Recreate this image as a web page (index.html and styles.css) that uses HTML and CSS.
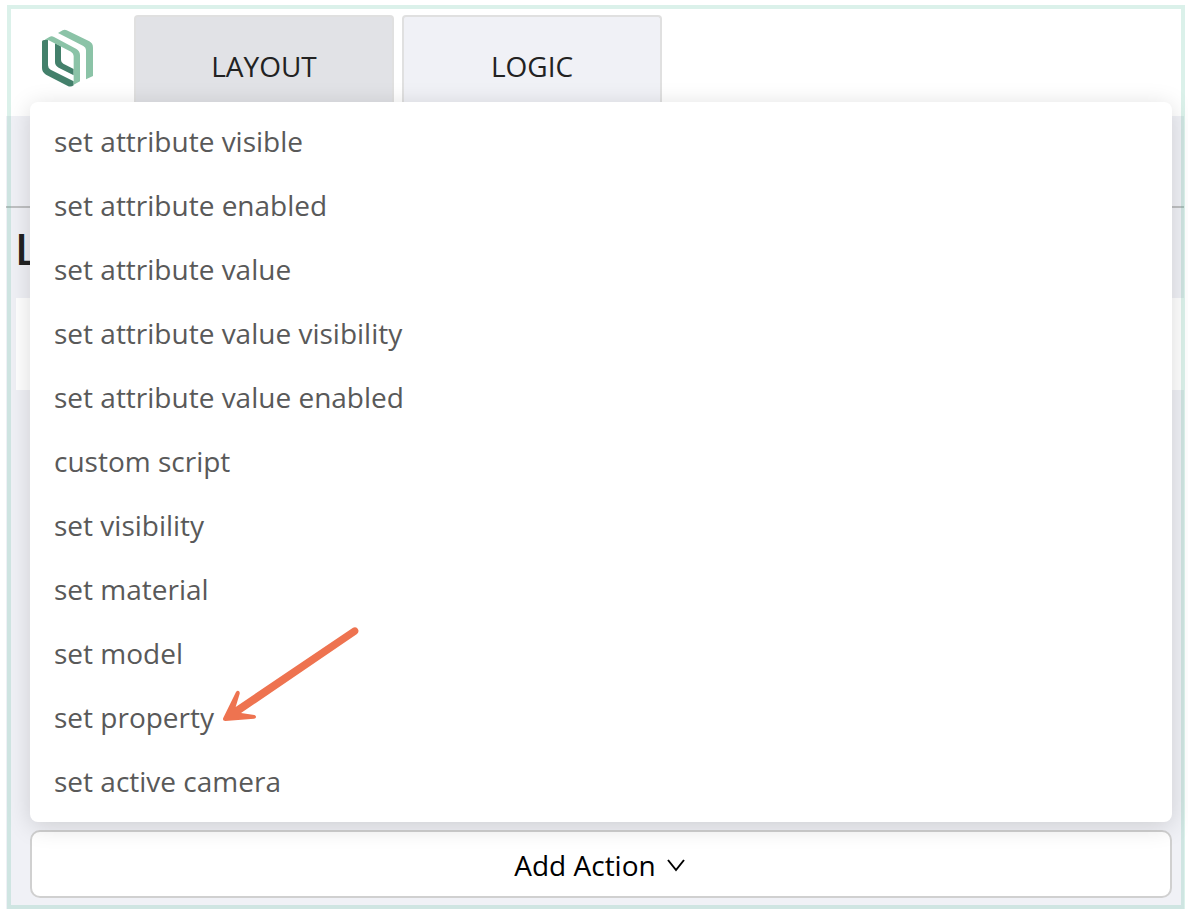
FILE: index.html
```html
<!DOCTYPE html>
<html lang="en">
<head>
    <meta charset="UTF-8">
    <meta name="viewport" content="width=device-width, initial-scale=1">
    <title>Layout editor</title>
    <link rel="stylesheet" href="styles.css">
</head>
<body>
    <div class="frame">
        <header class="topbar">
            <svg class="logo" viewBox="120 84 165 183" aria-hidden="true">
                <path class="logo-light" d="M174 99L188 91Q194 88 200 91L268 124Q279 130 279 143V228L258 238V150Q258 142 250 138Z"/>
                <path class="logo-dark" d="M126 125Q127 118 144 120V196Q144 205 152 209L221 244V256Q212 263 202 257L138 224Q126 217 126 204Z"/>
                <path class="logo-dark" d="M165 129L183 139V180Q183 187 190 191L221 207V226L176 203Q165 197 165 186Z"/>
                <path class="logo-light" d="M134 119L148 111Q155 107 162 111L228 146Q240 152 240 166V244L221 254V168Q221 160 213 155L146 121Z"/>
            </svg>
            <nav class="tabs">
                <button class="tab active" type="button">LAYOUT</button>
                <button class="tab" type="button">LOGIC</button>
            </nav>
        </header>

        <main class="workspace">
            <div class="toolbar"></div>
            <h1 class="title">L</h1>
            <div class="card"></div>

            <div class="dropdown">
                <ul class="menu">
                    <li><button class="menu-item" type="button">set attribute visible</button></li>
                    <li><button class="menu-item" type="button">set attribute enabled</button></li>
                    <li><button class="menu-item" type="button">set attribute value</button></li>
                    <li><button class="menu-item" type="button">set attribute value visibility</button></li>
                    <li><button class="menu-item" type="button">set attribute value enabled</button></li>
                    <li><button class="menu-item" type="button">custom script</button></li>
                    <li><button class="menu-item" type="button">set visibility</button></li>
                    <li><button class="menu-item" type="button">set material</button></li>
                    <li><button class="menu-item" type="button">set model</button></li>
                    <li class="marked">
                        <button class="menu-item" type="button">set property</button>
                        <svg class="arrow" viewBox="66 45 414 294" aria-hidden="true">
                            <path d="M459 53Q467 49 473 56Q479 65 471 72L123 309L163 315Q169 317 168 322Q167 326 162 326L76 333Q66 332 70 323L108 246Q112 241 116 243Q120 245 119 251L107 291Z"/>
                        </svg>
                    </li>
                    <li><button class="menu-item" type="button">set active camera</button></li>
                </ul>
                <button class="add-action" type="button">
                    Add Action
                    <svg class="chevron" viewBox="0 0 20 20" aria-hidden="true">
                        <path d="M2 5L10 15L18 5"/>
                    </svg>
                </button>
            </div>
        </main>
    </div>
</body>
</html>
```
FILE: styles.css
```css
* {
    box-sizing: border-box;
}
body {
    margin: 0;
    padding: 5px 3px 9px 7px;
    background: #fff;
    color: #222;
    font-family: "Open Sans", sans-serif;
    font-size: 28px;
}
button {
    font: inherit;
    cursor: pointer;
}
.frame {
    position: relative;
    display: flex;
    flex-direction: column;
    min-height: calc(100vh - 14px);
}
/* tinted outline drawn over the header and the workspace */
.frame::after {
    content: "";
    position: absolute;
    inset: 0;
    border: 4px solid rgba(76, 187, 152, 0.2);
    pointer-events: none;
}
.topbar {
    display: flex;
    gap: 39px;
    height: 111px;
    padding: 10px 33px 0;
}
.logo {
    width: 55px;
    height: 61px;
    margin-top: 13px;
}
.logo-light {
    fill: #8bc3a7;
}
.logo-dark {
    fill: #43806b;
}
.tabs {
    display: flex;
    gap: 8px;
}
.tab {
    width: 260px;
    padding: 0 0 2px;
    background: #f0f1f6;
    border: 2px solid #e0e0e0;
    border-bottom: 0;
    border-radius: 4px 4px 0 0;
    color: #222;
}
.tab.active {
    background: #e1e2e6;
}
.workspace {
    flex: 1;
    display: flex;
    flex-direction: column;
    margin: 0 1px 0 -1px;
    padding-bottom: 11px;
    background: #f0f1f6;
}
.toolbar {
    height: 92px;
    border-bottom: 2px solid #bfc0c2;
}
.title {
    margin: 0;
    padding: 0 0 8px 9px;
    font-size: 43px;
    font-weight: 600;
    line-height: 82px;
}
.card {
    height: 92px;
    margin-left: 10px;
    background: #fff;
}
.dropdown {
    position: relative;
    margin: auto 12px 0 24px;
}
.menu {
    position: absolute;
    z-index: 1;
    bottom: calc(100% + 8px);
    left: 0;
    right: 0;
    margin: 0;
    padding: 8px 0;
    list-style: none;
    background: #fff;
    border-radius: 8px;
    box-shadow: 0 4px 24px rgba(0, 0, 0, 0.15);
}
.menu-item {
    display: block;
    width: 100%;
    height: 64px;
    padding: 0 24px 2px;
    border: 0;
    background: none;
    color: #595959;
    text-align: left;
}
.marked {
    position: relative;
}
.arrow {
    position: absolute;
    left: 192px;
    bottom: 27px;
    width: 138px;
    height: 98px;
    fill: #ee7350;
    pointer-events: none;
}
.add-action {
    display: flex;
    align-items: center;
    justify-content: center;
    gap: 10px;
    width: 100%;
    height: 68px;
    padding: 2px 2px 0 0;
    background: #fff;
    border: 2px solid #d0d0d0;
    border-radius: 10px;
    color: #000;
}
.chevron {
    width: 20px;
    height: 20px;
    fill: none;
    stroke: #000;
    stroke-width: 2;
}
```
